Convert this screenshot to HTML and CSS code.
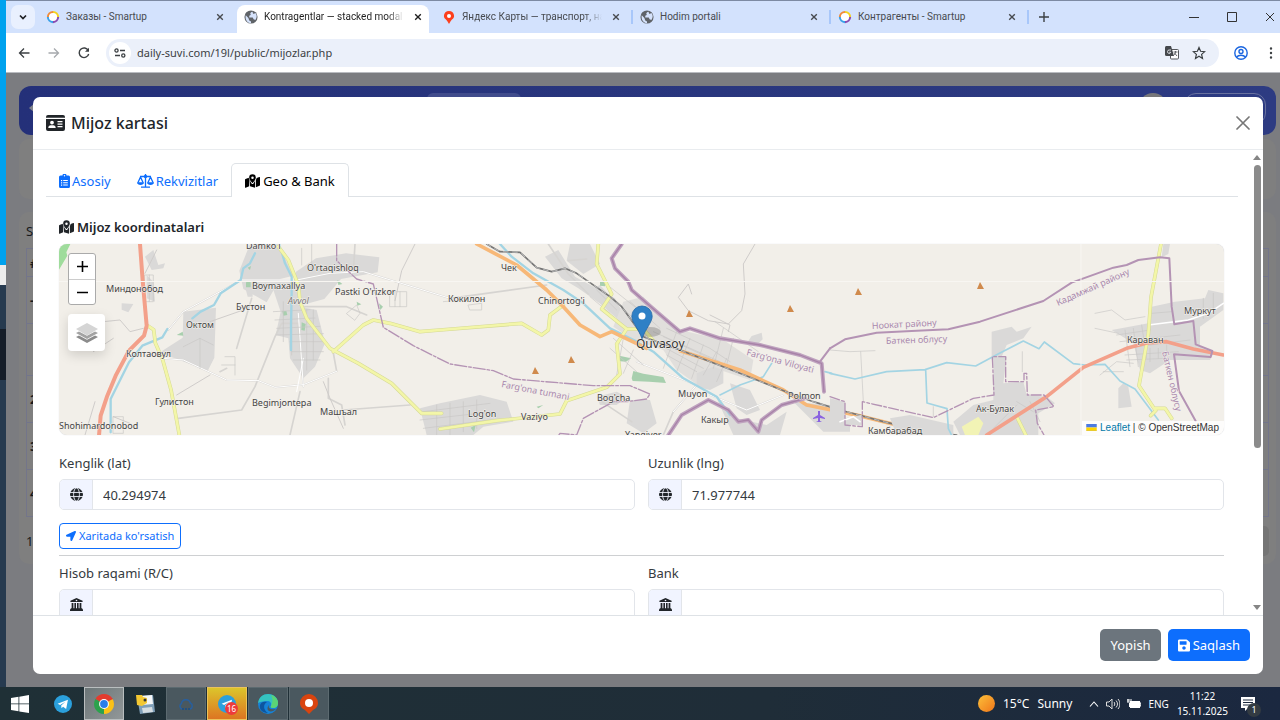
FILE: index.html
```html
<!DOCTYPE html>
<html lang="uz">
<head>
    <meta charset="UTF-8">
    <meta name="viewport" content="width=device-width, initial-scale=1.0">
    <title>Kontragentlar — stacked modal</title>
    <link rel="stylesheet" href="styles.css">
</head>
<body>
    <!-- shared icons -->
    <svg class="sprite" aria-hidden="true">
        <symbol id="i-close" viewBox="0 0 10 10"><path d="M1.500 1.500l7 7M8.500 1.500l-7 7" fill="none" stroke="currentColor" stroke-width="1.700"/></symbol>
        <symbol id="i-earth" viewBox="0 0 16 16"><circle cx="8" cy="8" r="7.500" fill="#5f6368"/><path d="M2 6l3 3 1 3 2 1v2C4 15 1 11 2 6zM8 2.500l-1 2 1 1-2 1v2h4l1 2 2 1c2-3 2-6 0-8l-2 1-1-1V2z" fill="#d5e2fb"/></symbol>
        <symbol id="i-ring" viewBox="0 0 16 16">
            <g fill="none" stroke-width="3">
                <path d="M8 2.500a5.500 5.500 0 0 1 5.500 5.500" stroke="#f5d21c"/>
                <path d="M13.500 8a5.500 5.500 0 0 1-5.500 5.500" stroke="#8a4bb0"/>
                <path d="M8 13.500a5.500 5.500 0 0 1-5.500-5.500" stroke="#3aa0e8"/>
                <path d="M2.500 8a5.500 5.500 0 0 1 5.500-5.500" stroke="#f08a3a"/>
            </g>
            <circle cx="8" cy="8" r="4.700" fill="#fff"/>
        </symbol>
        <symbol id="i-globe" viewBox="0 0 16 16"><circle cx="8" cy="8" r="8" fill="#212529"/><g fill="none" stroke="#f1f4ff" stroke-width="1.100"><path d="M0 5.500h16M0 10.500h16"/><ellipse cx="8" cy="8" rx="3.600" ry="8"/></g></symbol>
        <symbol id="i-bank" viewBox="0 0 16 16"><path d="M8 0l7.500 3.500V5H.5V3.500zM2 6h2.200v6.500H2zM5.400 6h2v6.500h-2zM8.600 6h2v6.500h-2zM11.800 6H14v6.500h-2.200zM1.200 12.500h13.600l1.200 2V16H0v-1.500z" fill="#212529"/><circle cx="8" cy="3" r="1" fill="#f1f4ff"/></symbol>
        <symbol id="i-map" viewBox="0 0 18 16"><path fill="currentColor" fill-rule="evenodd" d="M9 0a4 4 0 0 1 4 4c0 1.800-2.400 4.900-3.500 6.200a.7.7 0 0 1-1 0C7.400 8.900 5 5.800 5 4a4 4 0 0 1 4-4zm0 2.500a1.500 1.500 0 1 0 0 3 1.500 1.500 0 0 0 0-3zM0 6.500c0-.4.300-.8.600-1L4.500 4c.1 1 .4 1.900.9 2.800L5 14.300.8 16c-.4.100-.8-.1-.8-.6zM6 8l2 3.200c.6.700 1.400.7 2 0L12 8v8l-6-1.700zM13 7c.4-.8.800-1.600 1-2.500l3.200-1.300c.4-.2.800.1.800.6v8.900c0 .4-.3.800-.6 1L13 15.500z"/></symbol>
        <symbol id="i-plane" viewBox="0 0 20 20"><circle cx="10" cy="10" r="10" fill="#2ba0dc"/><path d="M4 9.800l11.500-4.600-2 10.400-3.400-2.600-1.800 1.800-.3-3 4.600-4.200-5.800 3.600z" fill="#fff"/></symbol>
    </svg>

    <div class="desktop">
        <div class="wallpaper">
            <div class="wall-light"></div>
            <div class="wall-dark"></div>
        </div>

        <div class="browser">
            <!-- tab strip -->
            <div class="tab-strip">
                <button type="button" class="tab-search" aria-label="Search tabs">
                    <svg width="10" height="10" viewBox="0 0 10 10"><path d="M2 3.500l3 3 3-3" fill="none" stroke="#202124" stroke-width="1.700"/></svg>
                </button>
                <div class="tab">
                    <svg class="favicon"><use href="#i-ring"/></svg>
                    <span class="tab-title">Заказы - Smartup</span>
                    <button type="button" class="tab-close" aria-label="Close"><svg><use href="#i-close"/></svg></button>
                </div>
                <div class="tab tab-active">
                    <svg class="favicon"><use href="#i-earth"/></svg>
                    <span class="tab-title fade">Kontragentlar — stacked modal</span>
                    <button type="button" class="tab-close" aria-label="Close"><svg><use href="#i-close"/></svg></button>
                </div>
                <div class="tab tab-line">
                    <svg class="favicon" viewBox="0 0 16 16"><path d="M8 1a5.800 5.800 0 0 1 5.800 5.800c0 3-3 4-4.300 6.500L8 16l-1.500-2.700C5.200 10.800 2.200 9.800 2.200 6.800A5.800 5.800 0 0 1 8 1z" fill="#fc3f1d"/><circle cx="8" cy="6.800" r="2.300" fill="#fff"/></svg>
                    <span class="tab-title fade">Яндекс Карты — транспорт, нав</span>
                    <button type="button" class="tab-close" aria-label="Close"><svg><use href="#i-close"/></svg></button>
                </div>
                <div class="tab tab-line">
                    <svg class="favicon"><use href="#i-earth"/></svg>
                    <span class="tab-title">Hodim portali</span>
                    <button type="button" class="tab-close" aria-label="Close"><svg><use href="#i-close"/></svg></button>
                </div>
                <div class="tab tab-line">
                    <svg class="favicon"><use href="#i-ring"/></svg>
                    <span class="tab-title">Контрагенты - Smartup</span>
                    <button type="button" class="tab-close" aria-label="Close"><svg><use href="#i-close"/></svg></button>
                </div>
                <button type="button" class="icon-btn" aria-label="New tab">
                    <svg width="10" height="10" viewBox="0 0 10 10"><path d="M5 0v10M0 5h10" stroke="#3c4043" stroke-width="1.400"/></svg>
                </button>
                <div class="window-buttons">
                    <button type="button" class="icon-btn" aria-label="Minimize"><svg width="10" height="10" viewBox="0 0 10 10"><path d="M0 5.500h10" stroke="#333"/></svg></button>
                    <button type="button" class="icon-btn" aria-label="Maximize"><svg width="10" height="10" viewBox="0 0 10 10"><path d="M.5.500h9v9h-9z" fill="none" stroke="#333"/></svg></button>
                    <button type="button" class="icon-btn" aria-label="Close window"><svg width="10" height="10" viewBox="0 0 10 10"><path d="M1 1l8 8M9 1L1 9" stroke="#333"/></svg></button>
                </div>
            </div>

            <!-- toolbar -->
            <div class="toolbar">
                <button type="button" class="icon-btn" aria-label="Back"><svg width="12" height="12" viewBox="0 0 12 12"><path d="M11.500 6H2M6 1.500L1.500 6 6 10.500" fill="none" stroke="#3c4043" stroke-width="1.300"/></svg></button>
                <button type="button" class="icon-btn" aria-label="Forward"><svg width="12" height="12" viewBox="0 0 12 12"><path d="M.5 6H10M6 1.500L10.500 6 6 10.500" fill="none" stroke="#a6a9ad" stroke-width="1.300"/></svg></button>
                <button type="button" class="icon-btn" aria-label="Reload"><svg width="12" height="12" viewBox="0 0 12 12"><path d="M10.300 3.500A4.800 4.800 0 1 0 10.700 7" fill="none" stroke="#3c4043" stroke-width="1.400"/><path d="M11 .8v4H7z" fill="#3c4043"/></svg></button>
                <div class="address-bar">
                    <span class="site-info"><svg width="12" height="12" viewBox="0 0 12 12"><g fill="none" stroke="#3c4043" stroke-width="1.300"><circle cx="2.500" cy="3.500" r="1.600"/><path d="M6 3.500h5M1 8.500h5"/><circle cx="9.300" cy="8.500" r="1.600"/></g></svg></span>
                    <input type="text" class="url" aria-label="Address" value="daily-suvi.com/19l/public/mijozlar.php">
                    <svg width="14" height="14" viewBox="0 0 14 14"><rect x="5.500" y="3.500" width="8" height="9.500" rx="1" fill="#fff" stroke="#55585c"/><path d="M0 1.500C0 .7.700 0 1.500 0H6l3 10H1.500A1.500 1.500 0 0 1 0 8.500z" fill="#45484c"/><path d="M6 4H4.200a1.700 1.700 0 1 0 1.600 2.200H4.300" fill="none" stroke="#e8ebf0" stroke-width=".9"/><path d="M8.500 6h4M10.500 5v1c-.3 2-1.200 3-2 3.600M9.500 7l2.500 3" fill="none" stroke="#55585c" stroke-width=".9"/></svg>
                    <svg width="14" height="14" viewBox="0 0 14 14"><path d="M7 1.500l1.600 3.800 4.100.4-3.100 2.700.9 4L7 10.300l-3.500 2.100.9-4-3.100-2.700 4.100-.4z" fill="none" stroke="#3c4043" stroke-width="1.200"/></svg>
                </div>
                <button type="button" class="icon-btn" aria-label="Profile"><svg width="14" height="14" viewBox="0 0 14 14"><g fill="none" stroke="#1b66e0" stroke-width="1.400"><circle cx="7" cy="7" r="6.200"/><circle cx="7" cy="5.500" r="2"/><path d="M2.700 11c1.800-2.400 6.800-2.400 8.600 0"/></g></svg></button>
                <button type="button" class="icon-btn menu-btn" aria-label="Menu"><svg width="4" height="12" viewBox="0 0 4 12"><g fill="#3c4043"><circle cx="2" cy="1.500" r="1.200"/><circle cx="2" cy="6" r="1.200"/><circle cx="2" cy="10.500" r="1.200"/></g></svg></button>
            </div>

            <!-- page under the backdrop -->
            <div class="page">
                <div class="navbar">
                    <svg width="12" height="12" viewBox="0 0 12 12"><path d="M0 6l6-5v10z" fill="#80838c"/></svg>
                    <span class="nav-pill"></span>
                    <span class="nav-avatar"></span>
                    <span class="nav-user"></span>
                </div>
                <div class="card card-filter"></div>
                <div class="card card-list">
                    <div class="list-title">S</div>
                    <div class="list-row list-head">#</div>
                    <div class="list-row">-</div>
                    <div class="list-row list-tall"></div>
                    <div class="list-row">2</div>
                    <div class="list-row">3</div>
                    <div class="list-row">4</div>
                    <div class="list-footer"><span>1</span><span class="pager"></span></div>
                </div>

                <div class="modal" role="dialog" aria-labelledby="modalTitle">
                    <div class="modal-header">
                        <svg width="19" height="16" viewBox="0 0 19 16"><path fill="#212529" fill-rule="evenodd" d="M2 0h15a2 2 0 0 1 2 2v.8H0V2a2 2 0 0 1 2-2zM0 4h19v10a2 2 0 0 1-2 2H2a2 2 0 0 1-2-2zm6 1.700a1.900 1.900 0 1 0 0 3.800 1.900 1.900 0 0 0 0-3.800zM2.300 13h7.400c0-1.600-1-2.700-2.400-2.700H4.700c-1.400 0-2.400 1.100-2.400 2.700zM11.500 6v1.200h5V6zm0 2.500v1.200h5V8.500zm0 2.500v1.200h5V11z"/></svg>
                        <h5 id="modalTitle" class="modal-title">Mijoz kartasi</h5>
                        <button type="button" class="btn-close" aria-label="Yopish"><svg width="14" height="14" viewBox="0 0 14 14"><path d="M1 1l12 12M13 1L1 13" stroke="#777" stroke-width="1.700" stroke-linecap="round"/></svg></button>
                    </div>

                    <div class="modal-main">
                        <div class="modal-body">
                            <div class="nav-tabs">
                                <a href="#asosiy" class="nav-link">
                                    <svg width="11" height="14" viewBox="0 0 11 14"><path fill="currentColor" fill-rule="evenodd" d="M1.500 1.500H3.500a2 2 0 0 1 4 0h2A1.500 1.500 0 0 1 11 3v9.500A1.500 1.500 0 0 1 9.500 14h-8A1.500 1.500 0 0 1 0 12.500V3a1.500 1.500 0 0 1 1.500-1.500zM5.500 1a.7.700 0 1 0 0 1.400.7.700 0 0 0 0-1.400zM2 6v1.200h1.200V6zm2.200 0v1h4.600V6zM2 8.200v1.200h1.200V8.200zm2.200 0v1h4.600v-1zM2 10.500v1.200h1.200v-1.200zm2.200 0v1h4.600v-1z"/></svg>
                                    Asosiy
                                </a>
                                <a href="#rekvizitlar" class="nav-link">
                                    <svg width="17" height="14" viewBox="0 0 17 14"><g fill="none" stroke="currentColor" stroke-width="1.300"><path d="M8.500 0v13M3 2.500h11M4 13.200h9"/><path d="M3.500 3L1 8.500M3.500 3L6 8.500M13.500 3L11 8.500M13.500 3L16 8.500"/></g><circle cx="8.500" cy="2.500" r="1.700" fill="currentColor"/><path d="M0 8.300h7c0 1.700-1.600 2.700-3.500 2.700S0 10 0 8.300zM10 8.300h7c0 1.700-1.600 2.700-3.500 2.700S10 10 10 8.300z" fill="currentColor"/></svg>
                                    Rekvizitlar
                                </a>
                                <a href="#geo" class="nav-link active">
                                    <svg width="15" height="14"><use href="#i-map"/></svg>
                                    Geo &amp; Bank
                                </a>
                            </div>

                            <div class="tab-pane" id="geo">
                                <h6 class="section-title"><svg width="15" height="14"><use href="#i-map"/></svg>Mijoz koordinatalari</h6>

                                <div class="map">
                                    <svg class="map-canvas" viewBox="0 0 1165 191" preserveAspectRatio="xMidYMid slice">
                                        <!-- terrain is drawn at 3x and scaled down -->
                                        <g transform="scale(.333333) translate(-27 -27)" fill="none" stroke-linejoin="round" stroke-linecap="round">
                                            <g fill="#dad9d8">
                                                <path d="M600 27h85l45 95-40 10-40 70-70-40-12-55z"/>
                                                <path d="M738 110l60-40 90-15 100 12-5 45-110 20-50 60-75 20-20-60z"/>
                                                <path d="M660 135l80 5 10 75 50 10 25 100-30 70-35 35-40-60-5-60-38-10 15-70z"/>
                                                <path d="M400 230l98-12-5 150-20 40-90-35-55-20 70-45z"/>
                                                <path d="M215 205l35 2-15 25-20-8zM285 65l25-20 15 45 20-5-5 15-35 5zM290 120l20 20 5 60-25-10zM580 135l28 0v50h-15z"/>
                                                <path d="M1170 505l120-25 80 20 20 60-90 15-30 25h-110z"/>
                                                <path d="M1110 520l60-15v95h-40z"/>
                                                <path d="M1485 65l40-20 50 80 120 65 20 40-30 0-100-70-50-30zM1560 27h60l30 60-50 30-50-40zM1610 170l40-20 80 90-30 10z"/>
                                                <path d="M1720 200l60-15 40 50 70 50 130 30 90 60-10 60-90-30-60 50-70-50-40-60-90-30-60-40z" fill="#e1dfdc"/>
                                                <path d="M1940 415l50-20 30 10v40l-40 20-40-10zM2040 445l60 20 30 60-40 15-30-20zM2090 325l15-22 30-10 3 20-15 15zM1740 495l60 0 20 70-40 30-50-30zM2230 500l110 10 60 50v30h-80zM1640 485l60-15 30 15-30 25-50 0z"/>
                                                <path d="M2000 490l60 60 90 20 60-40-20 70h-140z"/>
                                            </g>
                                            <path d="M27 27h34l-12 25 3 10-25 42z" fill="#9fdc9c"/>
                                            <path d="M588 142l14-3v18h-14zM697 228l12 0 3 12-12 2zM755 262l12 5-3 20-10-2zM862 135l15 12-12 3zM920 200l14 8-12 4zM380 300l18-10 2 12zM987 205l12 10-8 10zM593 98l10-5-3 12z" fill="#a8cfae"/>
                                            <path d="M1745 430l5-22 30 8 60 10 8 18-50-4-50-2zM1708 362l35 8-15 10-25-2zM1650 140l15-4v18l-15-2zM1262 578l15-8-5 22zM1460 515l20-5-15 10z" fill="#a8cfae"/>

                                            <!-- minor roads -->
                                            <g stroke="#d6d4d1" stroke-width="5">
                                                <path d="M335 370l65 5 130 60 95 2M355 285L400 230l175-95 165 0 100-20 100-5 260 80 290-40M625 437l50 20 85-8 100-40-10-55M880 525l200-15M385 550l190-25 40-70 60-150 20-40h50l15 190M560 340l45-150M530 400l-20 10M760 215h130l60 25M720 600l30-130M915 27l-5 85M835 430l0 60 40 20 10 60"/>
                                                <path d="M1555 77l55-5M1495 27l60 90 60 60M1760 380l180 70-70 80-30 70M1655 500l90 60M1980 480l110 45 110-45"/>
                                            </g>
                                            <g stroke="#cfccca" stroke-width="3">
                                                <path d="M1095 27l-40 80-20 90M320 45l-35 70M160 260l50-5 30 35 40-10M130 350l60-40M380 480l100-60M480 260l100-35M105 600l30-100M190 545l50 20M820 440l20 50 40 90"/>
                                                <path d="M2115 27l-35 60 5 90-10 50-40 40-60-10-60-30-30-40 30-40 10 30M1980 240l60 30-5 20"/>
                                            </g>
                                            <g stroke="#fff" stroke-width="3">
                                                <path d="M335 370l65 5 130 60 95 2M355 285L400 230l175-95 165 0 100-20 100-5 260 80M625 437l50 20 85-8 100-40M745 235l15 220M760 370l-20 100M1760 380l180 70-70 80M1980 480l110 45 110-45"/>
                                            </g>
                                            <!-- street grids -->
                                            <g stroke="#c8c7c6" stroke-width="2">
                                                <path d="M670 230l110-6M675 255l120-6M680 280l130-6M680 300l140-4M720 320l100 0M725 350l95 0M730 375l80 0M700 200v120M725 200v160M770 225v180M790 225v150"/>
                                                <path d="M1020 170h50v45h-50zM1035 170v45M1050 170v45M890 235l30-25 10 25-15 20zM525 365h30v55M515 390h40M285 120h25v80h-25zM190 545h30v50h-30zM298 120v80M400 335l50-25 40 20M450 310v90M755 40v50M785 27v80"/>
                                                <path d="M1120 530l200-25M1110 555l220-25M1120 580l200-25M1160 510v90M1200 505v95M1240 500v90M1280 495v85M1180 200l50-5M1255 210l40-5v20l-35 0zM1640 165l60 60M1620 185l60 50M1660 140l100 80M1720 220l80 80M1740 200l90 80"/>
                                                <path d="M1850 280l130 60 60 40M1840 305l140 65M1830 330l130 70M1850 360l90 50M1880 290l-40 110M1920 310l-40 100M1960 330l-35 100M2000 350l-40 70M1810 290l200 90M2030 370l-30 70M1690 310l90 80M1680 340l80 70M1720 310l-20 110M1750 345l-30 70"/>
                                                <path d="M1995 260l130 90M2020 280l-30 120M2050 310l-20 80"/>
                                            </g>

                                            <!-- rivers -->
                                            <g stroke="#a3d4e3" stroke-width="7">
                                                <path d="M615 55l-15 30-20 15-8 35-60 40-20 35-40 20-25 20M695 50l10 35 20 40 0 45-2 100 0 75M352 282l-15 25-60 25-40 50-30 60-25 50v100"/>
                                                <path d="M1350 27l35 38 65 50 90 50 60 40 80 75 80 40 50 30 90 80 100 55 40 55"/>
                                                <path d="M2010 480l60-30 70-25 25-40M2325 410l20 5" stroke-width="5"/>
                                            </g>

                                            <!-- yellow roads -->
                                            <g stroke="#d5d995" stroke-width="11">
                                                <path d="M293 272l18 12 5 40 22 50 25 90 25 136M685 35l30 40 30 75 5 50 20 50 70 90 85 45 100 60 60 60 30 30h60M850 350l90-80 30-15 50 10 90 25 60-5M1170 285l245-20 60 35 20-15 5-45 40-30M1645 27l-5 60 45 90-30 45 75 60-30 45 10 90-40 40-120 40-20 40-190 20-170 25"/>
                                                <path d="M1730 282l50 0 30 35"/>
                                            </g>
                                            <g stroke="#f3f6a8" stroke-width="8">
                                                <path d="M293 272l18 12 5 40 22 50 25 90 25 136M685 35l30 40 30 75 5 50 20 50 70 90 85 45 100 60 60 60 30 30h60M850 350l90-80 30-15 50 10 90 25 60-5M1170 285l245-20 60 35 20-15 5-45 40-30M1645 27l-5 60 45 90-30 45 75 60-30 45 10 90-40 40-120 40-20 40-190 20-170 25"/>
                                                <path d="M1730 282l50 0 30 35"/>
                                            </g>

                                            <!-- orange highway and railway -->
                                            <path d="M1280 27L1400 90 1490 165 1540 215 1590 270 1650 305 1685 290 1790 340M1890 347L2070 405 2200 465 2270 510 2370 530 2440 545 2540 570 2600 585" stroke="#f7b878" stroke-width="11"/>
                                            <path d="M1310 27L1350 50 1410 52 1460 98 1505 110 1545 100 1580 115 1680 185 1715 215 1740 250 1780 305 1890 345 2070 415 2220 475 2290 500 2370 525 2500 560 2630 590 2720 600" stroke="#757575" stroke-width="5"/>
                                            <path d="M1310 27L1350 50 1410 52 1460 98 1505 110 1545 100 1580 115 1680 185 1715 215 1740 250 1780 305 1890 345 2070 415 2220 475 2290 500 2370 525 2500 560 2630 590 2720 600" stroke="#ddd" stroke-width="2" stroke-dasharray="14 14"/>

                                            <path d="M270 27l8 110 12 135-8 30-45 45-40 75-25 60-20 60-5 60" stroke="#f3a08a" stroke-width="12"/>

                                            <!-- borders -->
                                            <g stroke="#b493b4">
                                                <path d="M860 27v50l60 55 50 15 30 130 90 55 110 55 130 20 60 25 240 20 110 0 60 25-10 15-60 8-40 0-90 50-20 50-50-5-20 30" stroke-width="4" stroke-dasharray="36 6 8 6"/>
                                                <g stroke-width="12" stroke="#bfa3bf">
                                                    <path d="M1715 27l-30 43 10 30 40 40 10 25 75 65 70 60 30-10 90 30 120 20 120 30 65 25 7 85"/>
                                                    <path d="M1855 600l40-60 80-45 60 30 30 35 30-5 30 35 10-35 60-45 70-20"/>
                                                </g>
                                                <path d="M1715 27l-30 43 10 30 40 40 10 25 75 65 70 60 30-10 90 30 120 20 120 30 65 25 7 85M1855 600l40-60 80-45 60 30 30 35 30-5 30 35 10-35 60-45 70-20" stroke="#a882a8" stroke-width="4"/>
                                                <path d="M2310 380l30-40" stroke-width="6"/>
                                            </g>
                                        </g>

                                        <!-- eastern side -->
                                        <g transform="scale(.333333) translate(2313 -27)" fill="none" stroke-linejoin="round" stroke-linecap="round">
                                            <g fill="#dad9d8">
                                                <path d="M485 290l60-15 15 15 45-15-25 35-50 20-15 35-30 10zM490 360l40 5-10 80 60-5 10 40 60 5 25 20-50 30 0 65H390l-20-40 60-50 60-15zM180 550l60-10 130 30v30H200z"/>
                                                <path d="M845 285l110-20 10-50 70-15 90-10 10-25 45 10v50l-70 50 0 60 40 20-10 20-120 0-60 40-30-10-20-80zM1000 27l20 0-5 30-20 10zM865 460l15-15 15 10 10 60-40 5zM0 490l45 10v50l50-10v30l-95 0z"/>
                                            </g>
                                            <path d="M395 575l50-30 15 20-15 35h-40z" fill="#f2f3b5"/>
                                            <g stroke="#c8c7c6" stroke-width="2">
                                                <path d="M860 300l100-15M870 320l180-20M880 340l200-25M885 360l160-10M890 375l120-5M885 285l15 110M910 280l15 115M935 270l15 100M960 340v40M985 340v30M1010 330v30M965 235l60-5M1120 190v60M1150 175v50M795 235l50-10 40 30 60-10M795 280l70 15M810 420l50-40 50 5M820 410h60"/>
                                                <path d="M0 345l60 5 75-3M92 350l8 150M577 350v60M310 515v30M560 500l50 30M600 500l30 60M490 580l70-70"/>
                                            </g>
                                            <path d="M955 270l120-15 60-20 45-30" stroke="#fff" stroke-width="5"/>
                                            <path d="M30 560l40-15 20 15" stroke="#fff" stroke-width="5"/>
                                            <path d="M0 415l75 17 95-22 115-6 65-21 87 10 60-32 83-43 47 23 16-20 87 65 35 4 60-2 45 50 45 24 70 93M287 404l4 100 60 17 4 60 10 20" stroke="#a3d4e3" stroke-width="5"/>
                                            <path d="M993 27l-30 160-8 110-28 155 50 75-15 15M975 520l30 0 20 30M560 545l30 60" stroke="#d5d995" stroke-width="11"/>
                                            <path d="M993 27l-30 160-8 110-28 155 50 75-15 15M975 520l30 0 20 30M560 545l30 60" stroke="#f3f6a8" stroke-width="8"/>
                                            <path d="M470 600l180-115 110-88 130-57 60-16 60-4 80 22 90 18" stroke="#f3a08a" stroke-width="11"/>
                                            <g stroke="#b493b4" stroke-width="6">
                                                <path d="M0 340L45 313 140 293 245 288 355 283 450 260 640 198 725 143 850 98 890 90 925 75 990 67 1018 70 1025 215 1033 268 1090 258 1097 328 1147 348 1142 366 1032 358 1047 468 1097 558"/>
                                                <path d="M97 575v-75l213 48 120-58 62-10-5-115h40v75h55v-25l8 0 2 65 50 0 30 35-55 10 5 40 20 35M0 485l45 15v70l50 5" stroke-width="4" stroke-dasharray="30 7 8 7"/>
                                            </g>
                                        </g>

                                        <!-- tile seams -->
                                        <path d="M0 37.500h1165M1022 0v191" stroke="#f8f6f2"/>

                                        <!-- peaks -->
                                        <g fill="#d08a4c">
                                            <path d="M476 123l4 7h-7zM512 112l4 7h-7zM630 66l4 7h-7zM731 61l4 7h-7zM799 44l4 7h-7zM921 38l4 7h-7z"/>
                                        </g>
                                        <path d="M759 167h2v4l5 3v1l-5-1v3l2 1h-6l2-1v-3l-5 1v-1l5-3z" fill="#8a63e0"/>

                                        <g class="place">
                                            <text x="187" y="5">Damko'i</text>
                                            <text x="47" y="48">Миндонобод</text>
                                            <text x="248" y="27">O'rtaqishloq</text>
                                            <text x="193" y="45">Boymaxallya</text>
                                            <text x="276" y="51">Pastki O'rizkor</text>
                                            <text x="177" y="66">Бустон</text>
                                            <text x="127" y="84">Октом</text>
                                            <text x="67" y="113">Колтаовул</text>
                                            <text x="96" y="161">Гулистон</text>
                                            <text x="193" y="162">Begimjontepa</text>
                                            <text x="261" y="171">Машъал</text>
                                            <text x="0" y="185">Shohimardonobod</text>
                                            <text x="442" y="27">Чек</text>
                                            <text x="389" y="58">Кокилон</text>
                                            <text x="479" y="60">Chinortog'i</text>
                                            <text x="409" y="173">Log'on</text>
                                            <text x="462" y="176">Vaziyo</text>
                                            <text x="538" y="157">Bog'cha</text>
                                            <text x="619" y="153">Muyon</text>
                                            <text x="729" y="155">Polmon</text>
                                            <text x="642" y="179">Какыр</text>
                                            <text x="566" y="194">Yangiyer</text>
                                            <text x="809" y="190">Камбарабад</text>
                                            <text x="917" y="168">Ак-Булак</text>
                                            <text x="1068" y="99">Караван</text>
                                            <text x="1125" y="70">Муркут</text>
                                        </g>
                                        <text class="place-hamlet" x="229" y="60">Avvol</text>
                                        <text class="town" x="577" y="104">Quvasoy</text>
                                        <g class="region">
                                            <text transform="translate(442 143) rotate(11)">Farg'ona tumani</text>
                                            <text transform="translate(687 111) rotate(15)">Farg'ona Viloyati</text>
                                            <text transform="translate(813 85) rotate(-3)">Ноокат району</text>
                                            <text transform="translate(827 100) rotate(-2)">Баткен облусу</text>
                                            <text transform="translate(999 62) rotate(-24)">Кадамжай району</text>
                                            <text transform="translate(1103 108) rotate(77)">Баткен облусу</text>
                                        </g>

                                        <!-- marker -->
                                        <ellipse cx="591" cy="88" rx="11" ry="5" fill="#000" opacity=".18"/>
                                        <path d="M583 62a10.200 10.200 0 0 1 10.200 10.200c0 6-6.700 12.500-10.200 22.500-3.500-10-10.200-16.500-10.200-22.500A10.200 10.200 0 0 1 583 62z" fill="#2e80c6" stroke="#2468a8" stroke-width=".8"/>
                                        <circle cx="583" cy="72" r="3.500" fill="#fff"/>
                                    </svg>

                                    <div class="map-controls">
                                        <div class="zoom-control">
                                            <button type="button" aria-label="Zoom in"><svg width="11" height="11" viewBox="0 0 11 11"><path d="M5.500 0v11M0 5.500h11" stroke="#000" stroke-width="1.600"/></svg></button>
                                            <button type="button" aria-label="Zoom out"><svg width="11" height="11" viewBox="0 0 11 11"><path d="M0 5.500h11" stroke="#000" stroke-width="1.600"/></svg></button>
                                        </div>
                                        <button type="button" class="layers" aria-label="Layers">
                                            <svg width="24" height="24" viewBox="0 0 24 24"><path d="M1 16l11 6 11-6-3-1.500-8 4.300-8-4.300z" fill="#8c8c8c"/><path d="M1 12l11 6 11-6-3-1.500-8 4.300-8-4.300z" fill="#a3a3a3"/><path d="M1 8l11-6 11 6-11 6.500z" fill="#d5d5d5"/></svg>
                                        </button>
                                    </div>
                                    <div class="attribution">
                                        <svg width="11" height="7" viewBox="0 0 12 8"><path fill="#4c7be1" d="M0 0h12v4H0z"/><path fill="#ffd500" d="M0 4h12v3H0z"/><path fill="#e0bc00" d="M0 7h12v1H0z"/></svg>
                                        <a href="#leaflet">Leaflet</a> | © OpenStreetMap
                                    </div>
                                </div>

                                <div class="row">
                                    <div class="field">
                                        <label for="lat">Kenglik (lat)</label>
                                        <div class="input-group">
                                            <span class="addon"><svg width="13" height="13"><use href="#i-globe"/></svg></span>
                                            <input type="text" id="lat" value="40.294974">
                                        </div>
                                    </div>
                                    <div class="field">
                                        <label for="lng">Uzunlik (lng)</label>
                                        <div class="input-group">
                                            <span class="addon"><svg width="13" height="13"><use href="#i-globe"/></svg></span>
                                            <input type="text" id="lng" value="71.977744">
                                        </div>
                                    </div>
                                </div>

                                <button type="button" class="btn btn-outline">
                                    <svg width="10" height="10" viewBox="0 0 512 512"><path fill="currentColor" d="M444.520 3.520L28.740 195.420c-47.970 22.390-31.980 92.750 19.190 92.750h175.910v175.910c0 51.170 70.360 67.170 92.750 19.190l191.900-415.780c15.990-38.390-25.590-79.970-63.970-63.970z"/></svg>
                                    Xaritada ko'rsatish
                                </button>
                                <hr>

                                <div class="row">
                                    <div class="field">
                                        <label for="account">Hisob raqami (R/C)</label>
                                        <div class="input-group">
                                            <span class="addon"><svg width="13" height="13"><use href="#i-bank"/></svg></span>
                                            <input type="text" id="account">
                                        </div>
                                    </div>
                                    <div class="field">
                                        <label for="bank">Bank</label>
                                        <div class="input-group">
                                            <span class="addon"><svg width="13" height="13"><use href="#i-bank"/></svg></span>
                                            <input type="text" id="bank">
                                        </div>
                                    </div>
                                </div>
                            </div>
                        </div>
                        <div class="scrollbar">
                            <svg width="8" height="5" viewBox="0 0 8 5"><path d="M0 5l4-5 4 5z" fill="#858585"/></svg>
                            <div class="track"><div class="thumb"></div></div>
                            <svg width="8" height="5" viewBox="0 0 8 5"><path d="M0 0l4 5 4-5z" fill="#858585"/></svg>
                        </div>
                    </div>

                    <div class="modal-footer">
                        <button type="button" class="btn btn-secondary">Yopish</button>
                        <button type="submit" class="btn btn-primary">
                            <svg width="12" height="13" viewBox="0 32 448 448"><path fill="currentColor" d="M433.941 129.941l-83.882-83.882A48 48 0 0 0 316.118 32H48C21.490 32 0 53.490 0 80v352c0 26.510 21.490 48 48 48h352c26.510 0 48-21.490 48-48V163.882a48 48 0 0 0-14.059-33.941zM224 416c-35.346 0-64-28.654-64-64 0-35.346 28.654-64 64-64s64 28.654 64 64c0 35.346-28.654 64-64 64zm96-304.520V212c0 6.627-5.373 12-12 12H76c-6.627 0-12-5.373-12-12V108c0-6.627 5.373-12 12-12h228.520c3.183 0 6.235 1.264 8.485 3.515l3.480 3.480A11.996 11.996 0 0 1 320 111.480z"/></svg>
                            Saqlash
                        </button>
                    </div>
                </div>
            </div>
        </div>
    </div>

    <!-- taskbar -->
    <div class="taskbar">
        <button type="button" class="task task-start" aria-label="Start"><svg width="18" height="18" viewBox="0 0 18 18"><path d="M0 3l7.500-1.200v6.700H0zM8.300 1.700L18 0v8.500H8.300zM0 9.300h7.500v6.900L0 15.100zM8.300 9.300H18V18l-9.700-1.600z" fill="#fff"/></svg></button>
        <button type="button" class="task" aria-label="Telegram"><svg width="18" height="18"><use href="#i-plane"/></svg></button>
        <button type="button" class="task task-active" aria-label="Chrome"><svg width="20" height="20" viewBox="0 0 20 20"><path d="M10 10L1.340 5A10 10 0 0 1 18.660 5z" fill="#e33b2e"/><path d="M10 10L18.660 5A10 10 0 0 1 10 20z" fill="#fbc116"/><path d="M10 10V20A10 10 0 0 1 1.340 5z" fill="#2ba24c"/><path d="M10 5.200h8.750L18 4H10z" fill="#e33b2e"/><circle cx="10" cy="10" r="4.900" fill="#fff"/><circle cx="10" cy="10" r="3.900" fill="#2a7de9"/></svg></button>
        <button type="button" class="task" aria-label="Files"><svg width="20" height="20" viewBox="0 0 20 20"><path d="M2 2l16-1 2 17-15 2z" fill="#7f9fb8"/><path d="M6 2l11-1 1 9-11 1z" fill="#f5f7f8"/><path d="M7 14l10-1 1 5-10 1z" fill="#d5dde2"/><path d="M1 1h6l1 2 4 1v5l-5 3-5-1z" fill="#f3c832"/><circle cx="10" cy="6" r="1.500" fill="#333"/></svg></button>
        <button type="button" class="task task-open" aria-label="Cloud"><svg width="16" height="14" viewBox="0 0 16 14"><path d="M4 12a3 3 0 0 1-.5-5.500A4.500 4.500 0 0 1 12.300 6 3.200 3.200 0 0 1 12 12" fill="none" stroke="#285f9e" stroke-width="1.500"/><path d="M4 12h8" stroke="#24507e" stroke-width="2" stroke-dasharray="2 1"/></svg></button>
        <button type="button" class="task task-alert" aria-label="Telegram, 16"><svg width="18" height="18"><use href="#i-plane"/></svg><span class="badge">16</span></button>
        <button type="button" class="task task-open" aria-label="Edge"><svg width="20" height="20" viewBox="0 0 20 20"><circle cx="10" cy="10" r="10" fill="#1683d8"/><path d="M0 9C1 3 5 0 10 0c6 0 10 4 10 9 0 3-2 5-5 5-2 0-3-1-2-2 1-3-1-5-4-5-4 0-7 1-9 2z" fill="#35c3c0"/><path d="M13 1c4 1 7 4 7 8 0 3-2 5-5 5-2 0-3-1-2-2 2-4 2-8 0-11z" fill="#5bd575"/><path d="M9 8c-4 2-4 8 1 11-6 0-9-4-8-8 1-3 4-4 7-3z" fill="#0d56a0"/><path d="M11 11c-1 3 1 5 7 4-2 2-5 3-7 2s-2-4 0-6z" fill="#4a585f"/></svg></button>
        <button type="button" class="task task-open" aria-label="Maps"><svg width="18" height="20" viewBox="0 0 18 20"><path d="M9 0a9 9 0 0 1 9 9c0 5-4 6-6 8l-3 3-3-3c-2-2-6-3-6-8a9 9 0 0 1 9-9z" fill="#d9440f"/><circle cx="9" cy="9" r="4" fill="#fff"/></svg></button>

        <div class="tray">
            <div class="weather"><span class="sun"></span><span>15°C</span><span>Sunny</span></div>
            <svg width="10" height="6" viewBox="0 0 10 6"><path d="M1 5.500L5 1l4 4.500" fill="none" stroke="#fff" stroke-width="1.100"/></svg>
            <svg width="14" height="12" viewBox="0 0 14 12"><path d="M.5 4v4H3l3 3V1L3 4zM8 4c1 1 1 3 0 4M10 2.500c2 2 2 5 0 7M12 1c2.500 3 2.500 7 0 10" fill="none" stroke="#ddd"/></svg>
            <svg width="14" height="10" viewBox="0 0 14 10"><path d="M3 2h10v7H3z" fill="#fff"/><path d="M13 4h1v3h-1zM0 1h3M1 0v3M4 0v4M0 3h5M2.500 4v4" stroke="#fff" fill="none"/></svg>
            <span class="lang">ENG</span>
            <div class="clock"><span>11:22</span><span>15.11.2025</span></div>
            <div class="notify">
                <svg width="14" height="14" viewBox="0 0 14 14"><path d="M0 0h14v11H7l-3 3v-3H0z" fill="#fff"/><path d="M2 3h10M2 5.500h10M2 8h7" stroke="#1c2a40"/></svg>
                <span class="notify-count">1</span>
            </div>
        </div>
    </div>
</body>
</html>
```
FILE: styles.css
```css
* {
    box-sizing: border-box;
}

body {
    margin: 0;
    height: 100vh;
    display: flex;
    flex-direction: column;
    overflow: hidden;
    font-family: "Noto Sans", "Open Sans", sans-serif;
    font-size: 13px;
    line-height: 20px;
    color: #212529;
}

button,
input {
    font: inherit;
    color: inherit;
    margin: 0;
    padding: 0;
    border: 0;
    background: none;
}

svg {
    flex: none;
}

.sprite {
    position: absolute;
    width: 0;
    height: 0;
}

.desktop {
    flex: 1;
    min-height: 0;
    display: flex;
}

/* sliver of the desktop left of the window */
.wallpaper {
    width: 6px;
    background: #263a4f;
    border-top: 265px solid #00a2ee;
}

.wall-light {
    height: 20px;
    background: #ececec;
}

.wall-dark {
    height: 51px;
    margin-top: 44px;
    background: #151d28;
}

.browser {
    flex: 1;
    min-width: 0;
    display: flex;
    flex-direction: column;
    border-top: 1px solid #7d8aa3;
}

/* tab strip */
.tab-strip {
    height: 32px;
    display: flex;
    align-items: center;
    padding-left: 5px;
    background: #d3e2fd;
    color: #474a4f;
    font-family: Roboto, "Noto Sans", sans-serif;
    font-size: 10px;
}

.tab-search {
    width: 24px;
    height: 24px;
    margin-right: 4px;
    display: flex;
    align-items: center;
    justify-content: center;
    border-radius: 7px;
    background: #e9f0fe;
}

.tab {
    width: 198px;
    height: 28px;
    align-self: flex-end;
    display: flex;
    align-items: center;
    padding: 0 9px 4px 7px;
    background: linear-gradient(#a8c7fa, #a8c7fa) no-repeat right 5px / 0 14px;
}

.tab-line {
    background-size: 2px 14px;
}

.tab-active {
    width: 192px;
    margin-right: 6px;
    padding-right: 3px;
    background: #fff;
    border-radius: 8px 8px 0 0;
    color: #1f1f1f;
}

.favicon {
    width: 14px;
    height: 14px;
    margin-right: 6px;
}

.tab-title {
    flex: 1;
    min-width: 0;
    margin-right: 6px;
    overflow: hidden;
    white-space: nowrap;
}

.fade {
    -webkit-mask-image: linear-gradient(to right, #000 88%, transparent);
    mask-image: linear-gradient(to right, #000 88%, transparent);
}

.tab-close,
.icon-btn {
    display: flex;
    align-items: center;
    justify-content: center;
}

.tab-close {
    width: 16px;
    height: 16px;
}

.tab-close svg {
    width: 8px;
    height: 8px;
}

.icon-btn {
    width: 30px;
    height: 30px;
}

.window-buttons {
    margin-left: auto;
    margin-right: -5px;
    display: flex;
    gap: 8px;
}

/* toolbar */
.toolbar {
    height: 40px;
    display: flex;
    align-items: center;
    padding-left: 3px;
    background: #fff;
    border-bottom: 1px solid #b9bbc0;
}

.address-bar {
    flex: 1;
    height: 28px;
    margin: 0 7px;
    padding: 0 13px 0 3px;
    display: flex;
    align-items: center;
    gap: 13px;
    border-radius: 14px;
    background: #ebf0fa;
}

.site-info {
    width: 22px;
    height: 22px;
    margin-right: -7px;
    display: flex;
    align-items: center;
    justify-content: center;
    border-radius: 11px;
    background: #fff;
}

.url {
    flex: 1;
    min-width: 0;
    font-size: 11px;
    color: #3c4043;
}

.menu-btn {
    width: 18px;
    margin-left: 6px;
}

/* page behind the modal, already dimmed */
.page {
    position: relative;
    flex: 1;
    min-height: 0;
    padding: 13px 4px 0 13px;
    background: #7b7c80;
}

.navbar {
    height: 49px;
    display: flex;
    align-items: flex-start;
    padding: 7px 10px;
    border-radius: 12px;
    background: linear-gradient(to right, #243079, #2d3b82);
}

.navbar svg {
    margin-top: 9px;
}

.nav-pill {
    width: 94px;
    height: 30px;
    margin-left: 386px;
    border-radius: 6px;
    background: #414c8c;
}

.nav-avatar {
    width: 28px;
    height: 28px;
    margin-left: auto;
    margin-right: 17px;
    border-radius: 14px;
    background: #77777a;
}

.nav-user {
    width: 82px;
    height: 32px;
    border: 1px solid #68719f;
    border-radius: 12px;
}

.card {
    border-radius: 10px;
    background: #7f7f7f;
}

.card-filter {
    height: 60px;
    margin-top: 4px;
}

.card-list {
    margin-top: 13px;
    padding: 9px 7px 0;
    color: #17191c;
}

.list-title {
    height: 27px;
}

.list-row {
    height: 47px;
    padding-left: 3px;
    line-height: 46px;
    font-weight: bold;
    border: 1px solid #73758a;
    border-bottom: 0;
}

.list-head {
    height: 28px;
    line-height: 28px;
}

.list-tall {
    height: 52px;
}

.list-footer {
    display: flex;
    justify-content: space-between;
    align-items: center;
    height: 48px;
    border-top: 1px solid #73758a;
}

.pager {
    width: 60px;
    height: 30px;
    border-radius: 5px;
    background: #757575;
}

/* modal */
.modal {
    position: absolute;
    inset: 24px 17px 13px 27px;
    display: flex;
    flex-direction: column;
    overflow: hidden;
    border-radius: 7px;
    background: #fff;
}

.modal-header {
    height: 53px;
    display: flex;
    align-items: center;
    gap: 6px;
    padding: 0 13px;
    border-bottom: 1px solid #e9ecef;
}

.modal-title {
    margin: 0;
    font-size: 16px;
    font-weight: 500;
}

.btn-close {
    display: flex;
    margin-left: auto;
}

.modal-main {
    flex: 1;
    min-height: 0;
    display: flex;
}

.modal-body {
    flex: 1;
    min-width: 0;
    padding: 13px;
    overflow: hidden;
}

.scrollbar {
    width: 12px;
    padding: 5px 0;
    display: flex;
    flex-direction: column;
    align-items: center;
}

.track {
    flex: 1;
    padding: 5px 0;
}

.thumb {
    width: 7px;
    height: 65%;
    border-radius: 4px;
    background: #8b8b8b;
}

.nav-tabs {
    height: 34px;
    display: flex;
    border-bottom: 1px solid #dee2e6;
}

.nav-link {
    height: 34px;
    padding: 0 12px;
    display: flex;
    align-items: center;
    gap: 2px;
    border: 1px solid transparent;
    border-bottom: 0;
    border-radius: 5px 5px 0 0;
    color: #0d6efd;
    text-decoration: none;
}

.nav-link.active {
    padding: 0 13px;
    gap: 3px;
    color: #000;
    background: #fff;
    border-color: #dee2e6;
}

.tab-pane {
    padding: 20px 14px 0 13px;
}

.section-title {
    display: flex;
    align-items: center;
    gap: 3px;
    margin: 0 0 7px;
    font-size: 13px;
    font-weight: 600;
}

/* map */
.map {
    position: relative;
    height: 191px;
    margin-bottom: 18px;
    overflow: hidden;
    border-radius: 8px;
    background: #f2efe9;
    box-shadow: 0 0 1px #c6c9d0;
}

.map-canvas {
    display: block;
    width: 100%;
    height: 100%;
}

.place,
.place-hamlet,
.region {
    font-size: 9px;
    fill: #444;
    paint-order: stroke;
    stroke: #f4f1ec;
    stroke-width: 1px;
}

.place-hamlet {
    font-style: italic;
    fill: #777;
}

.region {
    fill: #a988ad;
}

.town {
    font-size: 12px;
    fill: #333;
    paint-order: stroke;
    stroke: #f4f1ec;
    stroke-width: 1px;
}

.map-controls {
    position: absolute;
    top: 9px;
    left: 9px;
}

.zoom-control {
    width: 28px;
    margin-bottom: 9px;
    border: 1px solid #aaa;
    border-radius: 3px;
    background: #fff;
}

.zoom-control button {
    width: 26px;
    height: 25px;
    display: flex;
    align-items: center;
    justify-content: center;
}

.zoom-control button + button {
    border-top: 1px solid #ccc;
}

.layers {
    width: 37px;
    height: 37px;
    display: flex;
    align-items: center;
    justify-content: center;
    border-radius: 4px;
    background: #fff;
    box-shadow: 0 4px 12px rgba(0, 0, 0, 0.15);
}

.attribution {
    position: absolute;
    right: 0;
    bottom: 0;
    padding: 0 5px 0 4px;
    font-family: "Liberation Sans", Arial, sans-serif;
    font-size: 10px;
    line-height: 14px;
    color: #333;
    background: rgba(255, 255, 255, 0.8);
}

.attribution a {
    color: #0078a8;
    text-decoration: none;
}

/* form */
.row {
    display: flex;
    gap: 13px;
}

.field {
    flex: 1;
    min-width: 0;
}

.field label {
    display: block;
    margin-bottom: 6px;
    color: #343a40;
}

.input-group {
    height: 31px;
    display: flex;
    border: 1px solid #e2e5ea;
    border-radius: 5px;
    overflow: hidden;
}

.addon {
    width: 33px;
    display: flex;
    align-items: center;
    justify-content: center;
    background: #f1f4ff;
    border-right: 1px solid #e2e5ea;
}

.input-group input {
    flex: 1;
    min-width: 0;
    padding: 0 10px;
    color: #343a40;
}

.btn {
    display: flex;
    align-items: center;
    height: 32px;
    padding: 0 10px;
    gap: 3px;
    border-radius: 5px;
    color: #fff;
}

.btn-outline {
    height: 26px;
    margin-top: 13px;
    padding: 0 6px;
    border: 1px solid #0d6efd;
    border-radius: 4px;
    font-size: 11px;
    color: #0d6efd;
}

hr {
    margin: 6px 0 7px;
    border: 0;
    border-top: 1px solid #ced0d2;
}

.modal-footer {
    height: 59px;
    display: flex;
    align-items: center;
    justify-content: flex-end;
    gap: 7px;
    padding: 0 13px;
    border-top: 1px solid #dee2e6;
}

.btn-secondary {
    background: #6c757d;
}

.btn-primary {
    background: #0d6efd;
}

/* taskbar */
.taskbar {
    height: 33px;
    display: flex;
    align-items: center;
    gap: 1px;
    background: linear-gradient(to right, #1f3036, #1f2d38 60%, #1b2840);
    color: #fff;
    font-size: 11px;
}

.task {
    position: relative;
    width: 40px;
    height: 33px;
    display: flex;
    align-items: center;
    justify-content: center;
    border: 1px solid transparent;
}

.task-start {
    width: 42px;
    padding-right: 2px;
}

.task-active {
    background: linear-gradient(135deg, #6b7577, #929899);
    border-color: #b9bebf;
}

.task-open {
    background: #4a585f;
    border-color: #5c6a70;
}

.task-alert {
    background: linear-gradient(#dcc52b, #dd7522);
    border-color: #ecc35a;
}

.badge {
    position: absolute;
    right: 8px;
    bottom: 4px;
    width: 13px;
    border-radius: 7px;
    background: #ee3b3b;
    font-size: 8px;
    line-height: 13px;
}

.tray {
    margin-left: auto;
    padding-right: 25px;
    display: flex;
    align-items: center;
    gap: 7px;
}

.weather {
    display: flex;
    align-items: center;
    gap: 8px;
    margin-right: 10px;
    font-size: 12px;
}

.sun {
    width: 17px;
    height: 17px;
    border-radius: 9px;
    background: linear-gradient(135deg, #fcc03a, #f0761a);
}

.lang {
    font-size: 10px;
}

.clock {
    margin-left: 1px;
    display: flex;
    flex-direction: column;
    align-items: center;
    font-size: 10px;
    line-height: 15px;
}

.notify {
    position: relative;
    display: flex;
    margin-left: 6px;
}

.notify-count {
    position: absolute;
    left: 6px;
    top: 6px;
    width: 14px;
    border-radius: 7px;
    background: #333b42;
    font-size: 9px;
    line-height: 14px;
    text-align: center;
}
```
